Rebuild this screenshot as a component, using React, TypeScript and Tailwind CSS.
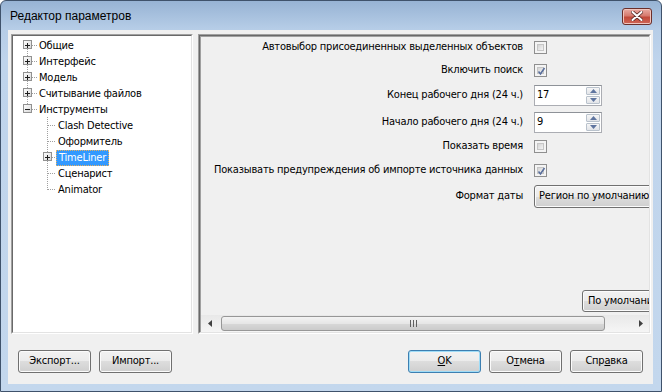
import React from 'react';

type TreeItem = { label: string; level: 0 | 1; box?: '+' | '-'; selected?: boolean };

const treeItems: TreeItem[] = [
  { label: 'Общие', level: 0, box: '+' },
  { label: 'Интерфейс', level: 0, box: '+' },
  { label: 'Модель', level: 0, box: '+' },
  { label: 'Считывание файлов', level: 0, box: '+' },
  { label: 'Инструменты', level: 0, box: '-' },
  { label: 'Clash Detective', level: 1 },
  { label: 'Оформитель', level: 1 },
  { label: 'TimeLiner', level: 1, box: '+', selected: true },
  { label: 'Сценарист', level: 1 },
  { label: 'Animator', level: 1 },
];

// row center inside the tree (relative to inner box)
const rowY = (i: number) => 9 + 16 * i;

function ExpandBox({ x, y, open }: { x: number; y: number; open: boolean }) {
  return (
    <g>
      <rect x={x + 0.5} y={y - 4.5} width={8} height={8} fill="url(#boxg)" stroke="#919191" />
      <line x1={x + 2} y1={y + 0.5} x2={x + 7} y2={y + 0.5} stroke="#1e1e1e" />
      {!open && <line x1={x + 4.5} y1={y - 2} x2={x + 4.5} y2={y + 3} stroke="#1e1e1e" />}
    </g>
  );
}

function TreeLines() {
  return (
    <svg className="absolute left-0 top-0 pointer-events-none" width={180} height={200}>
      <defs>
        <linearGradient id="boxg" x1="0" y1="0" x2="1" y2="1">
          <stop offset="0" stopColor="#ffffff" />
          <stop offset="1" stopColor="#d6d6d6" />
        </linearGradient>
      </defs>
      <g stroke="#a0a0a0" strokeDasharray="1 1">
        <line x1={14.5} y1={rowY(0)} x2={14.5} y2={rowY(4)} />
        {[0, 1, 2, 3, 4].map((i) => (
          <line key={i} x1={19} y1={rowY(i) + 0.5} x2={25} y2={rowY(i) + 0.5} />
        ))}
        <line x1={34.5} y1={rowY(4) + 8} x2={34.5} y2={rowY(9) + 1} />
        {[5, 6, 7, 8, 9].map((i) => (
          <line key={i} x1={35} y1={rowY(i) + 0.5} x2={42} y2={rowY(i) + 0.5} />
        ))}
      </g>
      {[0, 1, 2, 3].map((i) => (
        <ExpandBox key={i} x={10} y={rowY(i)} open={false} />
      ))}
      <ExpandBox x={10} y={rowY(4)} open />
      <ExpandBox x={30} y={rowY(7)} open={false} />
    </svg>
  );
}

function Tree() {
  return (
    <div className="w-[182px] h-[300px] border border-t-[#a0a0a0] border-l-[#a0a0a0] border-r-white border-b-white">
      <div className="h-full border border-t-[#696969] border-l-[#696969] border-r-[#e3e3e3] border-b-[#e3e3e3] bg-white">
        <div className="relative pt-[2px]">
          <TreeLines />
          {treeItems.map((it) => (
            <div key={it.label} className="h-[16px] flex items-center">
              {it.level === 0 ? (
                <span className="ml-[26px] leading-[16px]">{it.label}</span>
              ) : it.selected ? (
                <span className="ml-[43px] h-[16px] px-[2px] leading-[14px] bg-[#3399ff] text-white border border-dotted border-[#e8b060]">
                  {it.label}
                </span>
              ) : (
                <span className="ml-[45px] leading-[16px]">{it.label}</span>
              )}
            </div>
          ))}
        </div>
      </div>
    </div>
  );
}

function CheckBox({ checked }: { checked?: boolean }) {
  return (
    <div className="w-[13px] h-[13px] border border-[#8f8f8f] bg-[#f4f4f4] p-[2px]">
      <div className="relative w-full h-full border border-[#c6c6c6] bg-[linear-gradient(135deg,#d4d4d4,#f4f4f4)]">
        {checked && (
          <svg className="absolute -left-[1px] -top-[1px]" width={9} height={9} viewBox="0 0 9 9">
            <path d="M1.5 4.5 L3.5 7 L7.5 1" fill="none" stroke="#5a6f9c" strokeWidth={1.6} />
          </svg>
        )}
      </div>
    </div>
  );
}

function SpinHalf({ up }: { up?: boolean }) {
  return (
    <div className="flex-1 flex items-center justify-center border border-[#b9c2cc] rounded-[1px] bg-[linear-gradient(#f6f6f6,#e2e4e8)]">
      <svg width={7} height={4} viewBox="0 0 7 4">
        {up ? <path d="M0 4 L3.5 0 L7 4 Z" fill="#5f759f" /> : <path d="M0 0 L3.5 4 L7 0 Z" fill="#5f759f" />}
      </svg>
    </div>
  );
}

function Spin({ value }: { value: string }) {
  return (
    <div className="w-[68px] h-[21px] border border-[#abadb3] border-t-[#8e9298] bg-white flex">
      <span className="flex-1 pl-[2px] pt-[2px] leading-[13px]">{value}</span>
      <div className="w-[15px] flex flex-col gap-[1px] py-[1px] pr-[1px]">
        <SpinHalf up />
        <SpinHalf />
      </div>
    </div>
  );
}

function Row({ label, h, children }: { label: string; h: string; children: React.ReactNode }) {
  return (
    <div className={`flex items-center ${h}`}>
      <div className="w-[322px] shrink-0 text-right whitespace-nowrap">{label}</div>
      <div className="ml-[11px] shrink-0">{children}</div>
    </div>
  );
}

function WinButton({ children, focused, w = 'w-[73px]' }: { children: React.ReactNode; focused?: boolean; w?: string }) {
  return (
    <div
      className={`${w} h-[23px] shrink-0 rounded-[3px] border flex items-center justify-center bg-[linear-gradient(#f2f2f2,#ebebeb_50%,#dddddd_50%,#cfcfcf)] ${
        focused ? 'border-[#3c7fb1] shadow-[inset_0_0_0_1px_#9fdcf7]' : 'border-[#707070] shadow-[inset_0_0_0_1px_#fbfbfb]'
      }`}
    >
      {children}
    </div>
  );
}

function Settings() {
  return (
    <div className="w-[453px] h-[300px] border border-t-[#a0a0a0] border-l-[#a0a0a0] border-r-white border-b-white">
      <div className="h-full border border-t-[#696969] border-l-[#696969] border-r-[#e3e3e3] border-b-[#e3e3e3]">
        <div className="h-full flex flex-col border-t border-l border-[#a0a0a0] bg-[#f0f0f0]">
          <div className="flex-1 overflow-hidden flex flex-col">
            <Row label="Автовыбор присоединенных выделенных объектов" h="h-[21px]">
              <CheckBox />
            </Row>
            <Row label="Включить поиск" h="h-[24px]">
              <CheckBox checked />
            </Row>
            <Row label="Конец рабочего дня (24 ч.)" h="h-[27px]">
              <Spin value="17" />
            </Row>
            <Row label="Начало рабочего дня (24 ч.)" h="h-[26px]">
              <Spin value="9" />
            </Row>
            <Row label="Показать время" h="h-[23px]">
              <CheckBox />
            </Row>
            <Row label="Показывать предупреждения об импорте источника данных" h="h-[24px]">
              <CheckBox checked />
            </Row>
            <Row label="Формат даты" h="h-[28px]">
              <div className="w-[150px] h-[23px] rounded-[3px] border border-[#707070] flex items-center pl-[4px] bg-[linear-gradient(#f2f2f2,#ebebeb_50%,#dddddd_50%,#cfcfcf)] shadow-[inset_0_0_0_1px_#fbfbfb] whitespace-nowrap">
                Регион по умолчанию
              </div>
            </Row>
            <div className="flex-1" />
            <div className="flex pl-[381px] pb-[3px]">
              <div className="w-[90px] h-[22px] shrink-0 rounded-[3px] border border-[#707070] flex items-center pl-[5px] bg-[linear-gradient(#f2f2f2,#ebebeb_50%,#dddddd_50%,#cfcfcf)] shadow-[inset_0_0_0_1px_#fbfbfb] whitespace-nowrap">
                По умолчанию
              </div>
            </div>
          </div>
          {/* horizontal scrollbar */}
          <div className="h-[17px] flex items-center bg-[linear-gradient(#e8e8e8,#f5f5f5)]">
            <div className="w-[17px] h-full flex items-center justify-center">
              <svg width={4} height={7} viewBox="0 0 4 7">
                <path d="M4 0 L0 3.5 L4 7 Z" fill="#404040" />
              </svg>
            </div>
            <div className="ml-[3px] w-[384px] h-[15px] rounded-[3px] border border-[#979797] bg-[linear-gradient(#f3f3f3,#e6e6e6_50%,#d8d8d8_50%,#cbcbcb)] flex items-center justify-center">
              <svg width={7} height={7} viewBox="0 0 7 7">
                <path d="M0.5 0 V7 M3.5 0 V7 M6.5 0 V7" stroke="#606060" strokeWidth={1} />
              </svg>
            </div>
            <div className="flex-1" />
            <div className="w-[17px] h-full flex items-center justify-center">
              <svg width={4} height={7} viewBox="0 0 4 7">
                <path d="M0 0 L4 3.5 L0 7 Z" fill="#404040" />
              </svg>
            </div>
          </div>
        </div>
      </div>
    </div>
  );
}

export default function App() {
  return (
    <div className='w-[662px] h-[392px] bg-white text-[11px] tracking-[-0.2px] text-black font-["DejaVu_Sans_Condensed","DejaVu_Sans",sans-serif]'>
      <div className="w-full h-full flex flex-col rounded-t-[6px] border border-[#3f526b] bg-[linear-gradient(180deg,#97b3d4_0px,#b6cde7_28px,#bfd4ec_60px,#c3d7ed_100%)]">
        {/* title bar */}
        <div className="h-[29px] shrink-0 flex items-center justify-between pl-[9px] pr-[9px]">
          <span className='text-[12px] tracking-normal font-["Liberation_Sans",sans-serif] mt-[1px]'>Редактор параметров</span>
          <div className="w-[30px] h-[17px] mt-[1px] rounded-[3px] border border-[#6b2f2a] flex items-center justify-center bg-[linear-gradient(#e9aba3,#d67a6e_45%,#c24a3b_55%,#cf6656)] shadow-[inset_0_0_0_1px_#f0c4bd]">
            <svg width={12} height={10} viewBox="0 0 12 10">
              <path d="M1.5 1 L10.5 9 M10.5 1 L1.5 9" stroke="#5a2c28" strokeWidth={3.6} strokeLinecap="round" />
              <path d="M1.5 1 L10.5 9 M10.5 1 L1.5 9" stroke="#ffffff" strokeWidth={2} strokeLinecap="round" />
            </svg>
          </div>
        </div>
        {/* client area */}
        <div className="flex-1 ml-[7px] mr-[8px] mb-[7px] bg-[#f0f0f0] flex flex-col">
          <div className="flex gap-[5px] pl-[3px] pt-[4px]">
            <Tree />
            <Settings />
          </div>
          <div className="flex items-center mt-[16px] px-[10px]">
            <WinButton>Экспорт...</WinButton>
            <div className="w-[8px]" />
            <WinButton>Импорт...</WinButton>
            <div className="flex-1" />
            <WinButton focused>
              <span>
                <span className="underline">O</span>K
              </span>
            </WinButton>
            <div className="w-[8px]" />
            <WinButton>
              <span>
                О<span className="underline">т</span>мена
              </span>
            </WinButton>
            <div className="w-[8px]" />
            <WinButton>
              <span>
                Спр<span className="underline">а</span>вка
              </span>
            </WinButton>
          </div>
        </div>
      </div>
    </div>
  );
}
